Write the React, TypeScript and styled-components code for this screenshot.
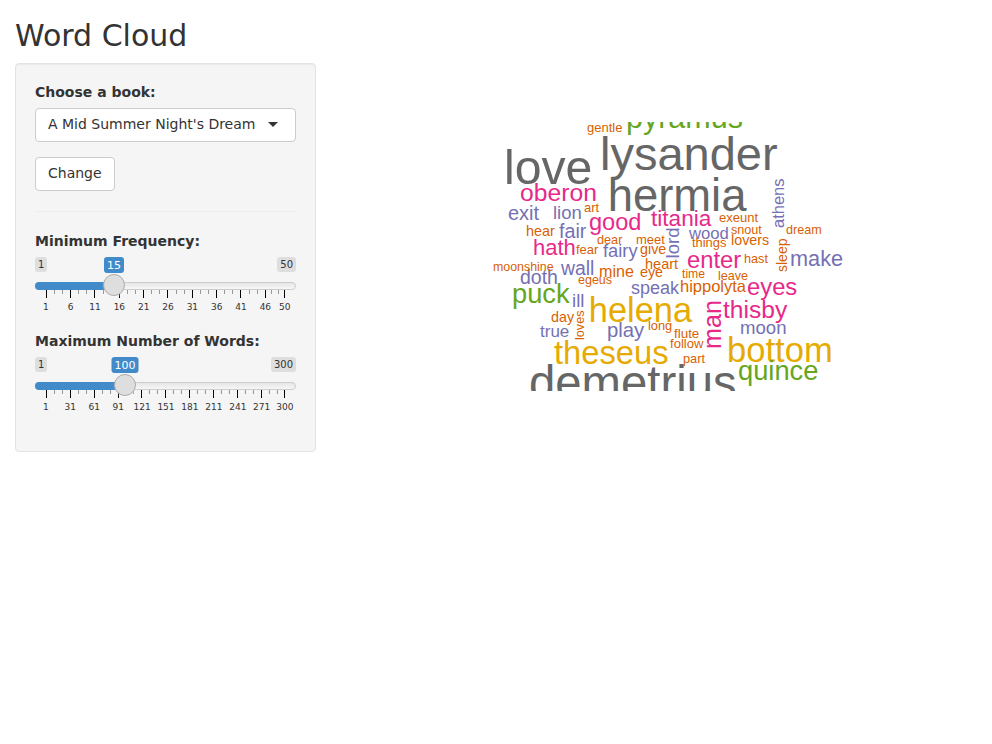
import React from "react";
import styled, { createGlobalStyle } from "styled-components";

const GlobalStyle = createGlobalStyle`
  *, *::before, *::after { box-sizing: border-box; }
  body {
    margin: 0;
    background: #fff;
    color: #333;
    font: 14px/20px "DejaVu Sans", sans-serif;
  }
`;

const Page = styled.div`
  padding: 19px 15px 0;
`;

const Title = styled.h2`
  margin: 0 0 11px;
  font-size: 30px;
  font-weight: 400;
  line-height: 33px;
`;

const Layout = styled.div`
  display: flex;
  align-items: flex-start;
`;

const Sidebar = styled.form`
  width: 301px;
  height: 389px;
  flex: none;
  padding: 19px;
  background: #f5f5f5;
  border: 1px solid #e3e3e3;
  border-radius: 4px;
  box-shadow: inset 0 1px 1px rgba(0, 0, 0, 0.05);
`;

const Group = styled.div`
  margin-bottom: 15px;
`;

const Label = styled.label`
  display: block;
  height: 20px;
  margin-bottom: 5px;
  font-weight: 700;
  line-height: 18px;
  white-space: nowrap;
`;

const Select = styled.div`
  display: flex;
  align-items: flex-start;
  justify-content: space-between;
  height: 34px;
  padding: 5px 17px 7px 12px;
  line-height: 20px;
  background: #fff;
  border: 1px solid #ccc;
  border-radius: 4px;
  white-space: nowrap;
`;

const Caret = styled.span`
  margin-top: 8px;
  border: 5px solid transparent;
  border-top-color: #333;
  border-bottom: 0;
`;

const Button = styled.button`
  display: block;
  height: 34px;
  padding: 5px 12px 7px;
  font: inherit;
  color: #333;
  background: #fff;
  border: 1px solid #ccc;
  border-radius: 4px;
`;

const Divider = styled.hr`
  margin: 20px 0;
  border: 0;
  border-top: 1px solid #eee;
`;

const SliderBox = styled.div`
  position: relative;
  height: 60px;
`;

const Limits = styled.div`
  display: flex;
  justify-content: space-between;
  height: 25px;
`;

const Limit = styled.span`
  height: 15px;
  padding: 1px 3px;
  font-size: 10px;
  line-height: 13.3px;
  background: #dedede;
  border-radius: 3px;
`;

const Current = styled.span<{ $at: number }>`
  position: absolute;
  top: 0;
  left: ${(p) => p.$at}px;
  transform: translateX(-50%);
  height: 16px;
  padding: 1px 3px;
  font-size: 11px;
  line-height: 15px;
  color: #fff;
  background: #428bca;
  border-radius: 3px;
`;

const Track = styled.div`
  height: 8px;
  background: linear-gradient(to bottom, #dedede -50%, #fff 150%);
  border: 1px solid #ccc;
  border-radius: 8px;
`;

const Bar = styled.div<{ $to: number }>`
  width: ${(p) => p.$to}px;
  height: 8px;
  margin: -1px;
  background: #428bca;
  border-radius: 8px 0 0 8px;
`;

const Handle = styled.span<{ $at: number }>`
  position: absolute;
  top: 17px;
  left: ${(p) => p.$at - 11}px;
  width: 22px;
  height: 22px;
  background: #dedede;
  border: 1px solid #ababab;
  border-radius: 50%;
  box-shadow: 1px 1px 3px rgba(255, 255, 255, 0.3);
`;

const Scale = styled.svg`
  display: block;
  overflow: visible;
  font-size: 9px;
  fill: #333;
`;

const Main = styled.main`
  padding: 59px 0 0 177px;
`;

const Cloud = styled.svg`
  display: block;
  font-family: "Liberation Sans", Arial, sans-serif;
`;

type SliderProps = { label: string; max: number; value: number; step: number; at: number };

const SPAN = 238.5;

function Slider({ label, max, value, step, at }: SliderProps) {
  const marks: number[] = [];
  for (let v = 1; v < max; v += step) marks.push(v);
  marks.push(max);
  const pos = (v: number) => 11.25 + ((v - 1) / (max - 1)) * SPAN;
  return (
    <Group>
      <Label>{label}</Label>
      <SliderBox>
        <Limits>
          <Limit>1</Limit>
          <Limit>{max}</Limit>
        </Limits>
        <Track>
          <Bar $to={at} />
        </Track>
        <Scale width="261" height="27">
          {marks.map((v, i) => {
            const x = pos(v);
            const gap = i < marks.length - 1 ? (pos(marks[i + 1]) - x) / 3 : 0;
            return (
              <g key={v}>
                <rect x={Math.floor(x)} y="0" width="1" height="8" fill="#000" />
                {gap > 0 && <rect x={Math.floor(x + gap)} y="0" width="1" height="4" fill="#999" />}
                {gap > 0 && <rect x={Math.floor(x + gap * 2)} y="0" width="1" height="4" fill="#999" />}
                <text x={i === 0 ? 10.8 : x + 0.1} y="20" textAnchor="middle">
                  {v}
                </text>
              </g>
            );
          })}
        </Scale>
        <Current $at={at}>{value}</Current>
        <Handle $at={at} />
      </SliderBox>
    </Group>
  );
}

const GRAY = "#666666";
const GOLD = "#e6ab02";
const GREEN = "#66a61e";
const PINK = "#e7298a";
const PURPLE = "#7570b3";
const ORANGE = "#d95f02";

type Word = [text: string, x: number, y: number, size: number, color: string, vertical?: boolean];

const words: Word[] = [
  ["lysander", 600, 170, 47, GRAY],
  ["love", 504, 184, 48.2, GRAY],
  ["hermia", 607.7, 211, 45.4, GRAY],
  ["demetrius", 529, 399, 47.3, GRAY],
  ["helena", 588.8, 322, 34.4, GOLD],
  ["bottom", 727, 362, 34.6, GOLD],
  ["theseus", 554, 364, 32.7, GOLD],
  ["pyramus", 626, 128, 30.5, GREEN],
  ["puck", 512, 303, 27.3, GREEN],
  ["quince", 738, 380, 27.3, GREEN],
  ["oberon", 520, 201.3, 24.7, PINK],
  ["good", 589, 230, 23.6, PINK],
  ["titania", 651, 226, 22.6, PINK],
  ["hath", 533, 255, 22, PINK],
  ["enter", 687, 268, 23.8, PINK],
  ["eyes", 747, 295, 23.8, PINK],
  ["thisby", 723, 318, 24.6, PINK],
  ["man", 721, 349, 25.2, PINK, true],
  ["exit", 508, 220, 20, PURPLE],
  ["lion", 553, 219, 18.5, PURPLE],
  ["fair", 559, 238, 19.7, PURPLE],
  ["wood", 689, 239, 16.7, PURPLE],
  ["athens", 784, 228, 16.5, PURPLE, true],
  ["fairy", 603, 257, 18.3, PURPLE],
  ["lord", 679, 258.5, 18.6, PURPLE, true],
  ["make", 790, 266, 21.7, PURPLE],
  ["wall", 561, 275, 19.4, PURPLE],
  ["doth", 520, 284.4, 19.5, PURPLE],
  ["speak", 631, 294, 18, PURPLE],
  ["ill", 572, 307, 18.6, PURPLE],
  ["true", 540, 337, 17, PURPLE],
  ["play", 607, 337, 20.3, PURPLE],
  ["moon", 740, 334, 18.6, PURPLE],
  ["gentle", 587, 132, 13, ORANGE],
  ["art", 584, 212, 13, ORANGE],
  ["hear", 526, 236, 14.4, ORANGE],
  ["exeunt", 719, 222, 13, ORANGE],
  ["snout", 731, 234, 12.6, ORANGE],
  ["lovers", 731, 245, 14.3, ORANGE],
  ["things", 692, 247, 12.9, ORANGE],
  ["dream", 786, 234, 12.6, ORANGE],
  ["fear", 576, 254, 13, ORANGE],
  ["dear", 597, 244, 12.7, ORANGE],
  ["meet", 636, 244, 13, ORANGE],
  ["give", 640, 254, 14.3, ORANGE],
  ["hast", 744, 263, 12.7, ORANGE],
  ["sleep", 787, 272, 14, ORANGE, true],
  ["moonshine", 493, 271, 12.4, ORANGE],
  ["egeus", 578, 284, 12.5, ORANGE],
  ["mine", 599, 277, 16.1, ORANGE],
  ["eye", 640, 277, 14.3, ORANGE],
  ["heart", 645, 269, 14.5, ORANGE],
  ["time", 682, 278, 12.2, ORANGE],
  ["leave", 718, 280, 12.6, ORANGE],
  ["hippolyta", 680, 292, 16.5, ORANGE],
  ["day", 551, 322, 14.3, ORANGE],
  ["loves", 584, 340, 12.7, ORANGE, true],
  ["long", 648, 330, 12.8, ORANGE],
  ["flute", 674, 338, 13.4, ORANGE],
  ["follow", 670, 348, 13.1, ORANGE],
  ["part", 683, 363, 12.8, ORANGE],
];

export default function App() {
  return (
    <>
      <GlobalStyle />
      <Page>
        <Title>Word Cloud</Title>
        <Layout>
          <Sidebar>
            <Group>
              <Label>Choose a book:</Label>
              <Select>
                A Mid Summer Night's Dream
                <Caret />
              </Select>
            </Group>
            <Button type="button">Change</Button>
            <Divider />
            <Slider label="Minimum Frequency:" max={50} value={15} step={5} at={79} />
            <Slider label="Maximum Number of Words:" max={300} value={100} step={30} at={90} />
          </Sidebar>
          <Main>
            <Cloud width="351" height="269" viewBox="493 122 351 269">
              {words.map(([text, x, y, size, color, vertical]) => (
                <text
                  key={text}
                  fontSize={size}
                  fill={color}
                  transform={`translate(${x} ${y})${vertical ? " rotate(-90)" : ""}`}
                >
                  {text}
                </text>
              ))}
            </Cloud>
          </Main>
        </Layout>
      </Page>
    </>
  );
}
